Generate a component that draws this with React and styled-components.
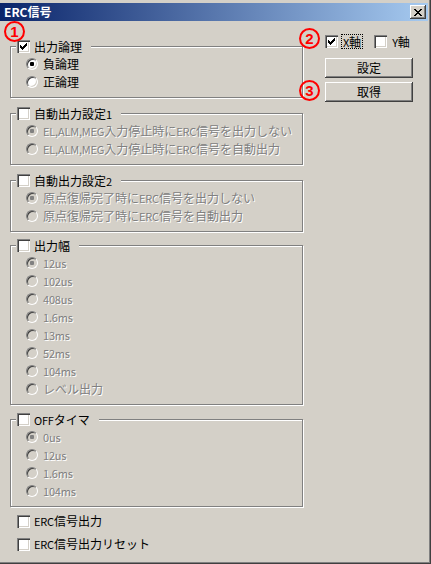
import React from 'react';
import styled, { createGlobalStyle } from 'styled-components';

const GlobalStyle = createGlobalStyle`
  html, body {
    margin: 0;
    padding: 0;
    background: #d4d0c8;
  }
  body {
    font-family: "Noto Sans CJK JP", "Liberation Sans", sans-serif;
    font-size: 12px;
  }
`;

const Window = styled.div`
  position: relative;
  width: 431px;
  height: 564px;
  box-sizing: border-box;
  padding: 3px 3px 2px 0;
  background: #d4d0c8;
  box-shadow: inset -1px -1px 0 #404040, inset -2px -2px 0 #808080;
  display: flex;
  flex-direction: column;
  overflow: hidden;
`;

const TitleBar = styled.div`
  height: 18px;
  display: flex;
  align-items: center;
  justify-content: space-between;
  padding: 0 2px 0 4px;
  background: linear-gradient(to right, #0a246a, #a6caf0);
`;

const Title = styled.span`
  color: #fff;
  font-weight: bold;
  font-size: 12px;
  line-height: 18px;
`;

const CloseButton = styled.div`
  width: 16px;
  height: 14px;
  display: flex;
  align-items: center;
  justify-content: center;
  background: #d4d0c8;
  box-shadow: inset -1px -1px 0 #404040, inset 1px 1px 0 #fff,
    inset -2px -2px 0 #808080;
`;

const Body = styled.div`
  display: flex;
  flex: 1;
`;

const LeftColumn = styled.div`
  display: flex;
  flex-direction: column;
  padding-left: 10px;
  width: 293px;
`;

const Group = styled.div`
  display: flex;
  flex-direction: column;
  box-sizing: border-box;
  width: 293px;
  margin-top: ${p => p.$top}px;
  padding: 0 0 6px 15px;
  border: 1px solid #808080;
  box-shadow: inset 1px 1px 0 #fff, 1px 1px 0 #fff;
`;

const Legend = styled.div`
  align-self: flex-start;
  display: flex;
  align-items: center;
  gap: 4px;
  height: 13px;
  margin: -7px 0 2px -10px;
  padding: 0 9px 0 1px;
  background: #d4d0c8;
  color: #000;
  line-height: 13px;
  white-space: nowrap;
`;

const OptionRow = styled.div`
  display: flex;
  align-items: center;
  gap: 5px;
  height: 18px;
  white-space: nowrap;
`;

const OptionText = styled.span`
  line-height: 18px;
  color: ${p => (p.$disabled ? '#808080' : '#000')};
  text-shadow: ${p => (p.$disabled ? '1px 1px 0 #fff' : 'none')};
`;

// latin runs are narrower in the original dialog font
const Latin = styled.span`
  font-size: 11px;
  letter-spacing: -0.2px;
`;

const RadioBox = styled.span`
  width: 12px;
  height: 12px;
  box-sizing: border-box;
  border-radius: 50%;
  border: 1px solid;
  border-color: #808080 #fff #fff #808080;
  box-shadow: inset 1px 1px 0 #404040, inset -1px -1px 0 #d4d0c8;
  background: ${p => (p.$disabled ? '#d4d0c8' : '#fff')};
  flex: none;
  display: flex;
  align-items: center;
  justify-content: center;
`;

const RadioDot = styled.span`
  width: 4px;
  height: 4px;
  border-radius: 1px;
  background: ${p => (p.$disabled ? '#808080' : '#000')};
`;

const CheckBox = styled.span`
  width: 13px;
  height: 13px;
  flex: none;
  box-sizing: border-box;
  background: #fff;
  box-shadow: inset 1px 1px 0 #808080, inset 2px 2px 0 #404040,
    inset -1px -1px 0 #fff, inset -2px -2px 0 #d4d0c8;
  display: flex;
`;

const CheckRow = styled.div`
  display: flex;
  align-items: center;
  gap: 4px;
  height: 18px;
  padding-left: 7px;
  margin-top: ${p => p.$top}px;
  line-height: 18px;
  white-space: nowrap;
`;

const RightPanel = styled.div`
  display: flex;
  flex-direction: column;
  margin-left: 22px;
  padding-top: 13px;
`;

const AxisRow = styled.div`
  display: flex;
  align-items: center;
  height: 15px;
`;

const AxisLabel = styled.span`
  margin: 0 11px 0 3px;
  padding: 0 1px;
  height: 15px;
  line-height: 14px;
  box-sizing: border-box;
  border: 1px dotted ${p => (p.$focused ? '#000' : 'transparent')};
`;

const Button = styled.div`
  width: 88px;
  height: 20px;
  margin-top: ${p => p.$top}px;
  display: flex;
  align-items: center;
  justify-content: center;
  background: #d4d0c8;
  box-shadow: inset -1px -1px 0 #404040, inset 1px 1px 0 #fff,
    inset -2px -2px 0 #808080;
  line-height: 20px;
`;

const Marker = styled.span`
  position: absolute;
  left: ${p => p.$x}px;
  top: ${p => p.$y}px;
  width: 21px;
  height: 21px;
  box-sizing: border-box;
  border: 2px solid #f00;
  border-radius: 50%;
  color: #f00;
  font-family: "Liberation Sans", sans-serif;
  font-weight: bold;
  font-size: 15px;
  line-height: 17px;
  text-align: center;
`;

const CheckMark = () => (
  <svg width="13" height="13" viewBox="0 0 13 13" shapeRendering="crispEdges">
    <path
      fill="#000"
      d="M3 5h1v3h-1zM4 6h1v3h-1zM5 7h1v3h-1zM6 6h1v3h-1zM7 5h1v3h-1zM8 4h1v3h-1zM9 3h1v3h-1z"
    />
  </svg>
);

const CloseGlyph = () => (
  <svg width="8" height="7" viewBox="0 0 8 7" shapeRendering="crispEdges">
    <path
      fill="#000"
      d="M0 0h2v1h-2zM6 0h2v1h-2zM1 1h2v1h-2zM5 1h2v1h-2zM2 2h4v1h-4zM3 3h2v1h-2zM2 4h4v1h-4zM1 5h2v1h-2zM5 5h2v1h-2zM0 6h2v1h-2zM6 6h2v1h-2z"
    />
  </svg>
);

const Txt = ({ children }) =>
  children
    .split(/([\x20-\x7e]+)/)
    .filter(Boolean)
    .map((run, i) =>
      /^[\x20-\x7e]+$/.test(run) ? <Latin key={i}>{run}</Latin> : run
    );

const Check = ({ checked }) => <CheckBox>{checked && <CheckMark />}</CheckBox>;

const Radio = ({ selected, disabled }) => (
  <RadioBox $disabled={disabled}>
    {selected && <RadioDot $disabled={disabled} />}
  </RadioBox>
);

const groups = [
  {
    title: '出力論理',
    checked: true,
    enabled: true,
    top: 25,
    options: ['負論理', '正論理'],
  },
  {
    title: '自動出力設定1',
    top: 15,
    options: [
      'EL,ALM,MEG入力停止時にERC信号を出力しない',
      'EL,ALM,MEG入力停止時にERC信号を自動出力',
    ],
  },
  {
    title: '自動出力設定2',
    top: 15,
    options: ['原点復帰完了時にERC信号を出力しない', '原点復帰完了時にERC信号を自動出力'],
  },
  {
    title: '出力幅',
    top: 13,
    options: ['12us', '102us', '408us', '1.6ms', '13ms', '52ms', '104ms', 'レベル出力'],
  },
  {
    title: 'OFFタイマ',
    top: 14,
    options: ['0us', '12us', '1.6ms', '104ms'],
  },
];

export default function App() {
  return (
    <>
      <GlobalStyle />
      <Window>
        <TitleBar>
          <Title>ERC信号</Title>
          <CloseButton>
            <CloseGlyph />
          </CloseButton>
        </TitleBar>
        <Body>
          <LeftColumn>
            {groups.map(g => (
              <Group key={g.title} $top={g.top}>
                <Legend>
                  <Check checked={g.checked} />
                  <span>
                    <Txt>{g.title}</Txt>
                  </span>
                </Legend>
                {g.options.map((o, i) => (
                  <OptionRow key={o}>
                    <Radio selected={i === 0} disabled={!g.enabled} />
                    <OptionText $disabled={!g.enabled}>
                      <Txt>{o}</Txt>
                    </OptionText>
                  </OptionRow>
                ))}
              </Group>
            ))}
            <CheckRow $top={5}>
              <Check />
              <span>
                <Txt>ERC信号出力</Txt>
              </span>
            </CheckRow>
            <CheckRow $top={5}>
              <Check />
              <span>
                <Txt>ERC信号出力リセット</Txt>
              </span>
            </CheckRow>
          </LeftColumn>
          <RightPanel>
            <AxisRow>
              <Check checked />
              <AxisLabel $focused>
                <Txt>X軸</Txt>
              </AxisLabel>
              <Check />
              <AxisLabel>
                <Txt>Y軸</Txt>
              </AxisLabel>
            </AxisRow>
            <Button $top={9}>設定</Button>
            <Button $top={4}>取得</Button>
          </RightPanel>
        </Body>
        <Marker $x={4} $y={21}>1</Marker>
        <Marker $x={299} $y={28}>2</Marker>
        <Marker $x={299} $y={80}>3</Marker>
      </Window>
    </>
  );
}
